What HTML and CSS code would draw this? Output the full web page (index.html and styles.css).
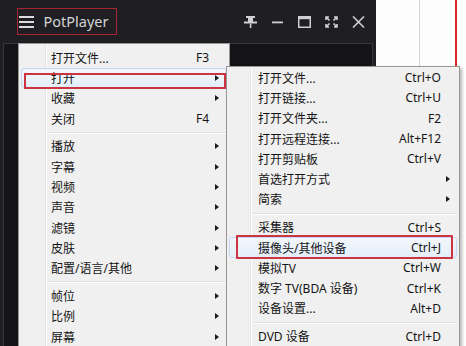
FILE: index.html
```html
<!DOCTYPE html>
<html lang="zh-CN">
<head>
<meta charset="utf-8">
<title>PotPlayer</title>
<link rel="stylesheet" href="styles.css">
</head>
<body>
<div class="screen">
  <div class="player">
    <div class="titlebar">
      <div class="brand">
        <svg class="burger" width="15" height="12" viewBox="0 0 15 12"><rect x="0" y="0" width="15" height="2"/><rect x="0" y="5" width="15" height="2"/><rect x="0" y="10" width="15" height="2"/></svg>
        <span class="brand-name">PotPlayer</span>
      </div>
      <div class="controls">
        <svg width="13" height="12" viewBox="0 0 13 12"><rect x="2" y="0" width="9" height="2"/><rect x="4" y="2" width="5" height="4"/><rect x="0" y="5.5" width="13" height="2"/><rect x="5.8" y="7.5" width="1.6" height="4.5"/></svg>
        <svg width="13" height="12" viewBox="0 0 13 12"><rect x="1" y="5.5" width="11" height="1.8"/></svg>
        <svg width="13" height="12" viewBox="0 0 13 12"><rect x="0.75" y="0.75" width="11.5" height="10.5" fill="none" stroke-width="1.5"/><rect x="0" y="0" width="13" height="3.2"/></svg>
        <svg width="13" height="12" viewBox="0 0 13 12" class="fs"><path d="M1 4V1h3M1 1l3.5 3.5M12 4V1H9M12 1L8.5 4.5M1 8v3h3M1 11l3.5-3.5M12 8v3H9M12 11L8.5 7.5"/></svg>
        <svg width="13" height="12" viewBox="0 0 13 12" class="fs"><path d="M1 0.5l11 11M12 0.5l-11 11"/></svg>
      </div>
    </div>
    <div class="panel"></div>
  </div>
  <div class="side">
    <div class="side-a"></div>
    <div class="side-b"></div>
  </div>

  <div class="menu main-menu">
    <div class="item"><span class="label">打开文件...</span><span class="key">F3</span><span class="arrow-col"></span></div>
    <div class="item hover"><span class="label">打开</span><span class="key"></span><span class="arrow-col"><i class="arrow"></i></span></div>
    <div class="item"><span class="label">收藏</span><span class="key"></span><span class="arrow-col"><i class="arrow"></i></span></div>
    <div class="item"><span class="label">关闭</span><span class="key">F4</span><span class="arrow-col"></span></div>
    <div class="sep"></div>
    <div class="item"><span class="label">播放</span><span class="key"></span><span class="arrow-col"><i class="arrow"></i></span></div>
    <div class="item"><span class="label">字幕</span><span class="key"></span><span class="arrow-col"><i class="arrow"></i></span></div>
    <div class="item"><span class="label">视频</span><span class="key"></span><span class="arrow-col"><i class="arrow"></i></span></div>
    <div class="item"><span class="label">声音</span><span class="key"></span><span class="arrow-col"><i class="arrow"></i></span></div>
    <div class="item"><span class="label">滤镜</span><span class="key"></span><span class="arrow-col"><i class="arrow"></i></span></div>
    <div class="item"><span class="label">皮肤</span><span class="key"></span><span class="arrow-col"><i class="arrow"></i></span></div>
    <div class="item"><span class="label">配置/语言/其他</span><span class="key"></span><span class="arrow-col"><i class="arrow"></i></span></div>
    <div class="sep"></div>
    <div class="item"><span class="label">帧位</span><span class="key"></span><span class="arrow-col"><i class="arrow"></i></span></div>
    <div class="item"><span class="label">比例</span><span class="key"></span><span class="arrow-col"><i class="arrow"></i></span></div>
    <div class="item"><span class="label">屏幕</span><span class="key"></span><span class="arrow-col"><i class="arrow"></i></span></div>
    <div class="mark mark-main"></div>
  </div>

  <div class="menu sub-menu">
    <div class="item"><span class="label">打开文件...</span><span class="key">Ctrl+O</span><span class="arrow-col"></span></div>
    <div class="item"><span class="label">打开链接...</span><span class="key">Ctrl+U</span><span class="arrow-col"></span></div>
    <div class="item"><span class="label">打开文件夹...</span><span class="key">F2</span><span class="arrow-col"></span></div>
    <div class="item"><span class="label">打开远程连接...</span><span class="key">Alt+F12</span><span class="arrow-col"></span></div>
    <div class="item"><span class="label">打开剪贴板</span><span class="key">Ctrl+V</span><span class="arrow-col"></span></div>
    <div class="item"><span class="label">首选打开方式</span><span class="key"></span><span class="arrow-col"><i class="arrow"></i></span></div>
    <div class="item"><span class="label">简索</span><span class="key"></span><span class="arrow-col"><i class="arrow"></i></span></div>
    <div class="sep"></div>
    <div class="item"><span class="label">采集器</span><span class="key">Ctrl+S</span><span class="arrow-col"></span></div>
    <div class="item hover"><span class="label">摄像头/其他设备</span><span class="key">Ctrl+J</span><span class="arrow-col"></span></div>
    <div class="item"><span class="label">模拟TV</span><span class="key">Ctrl+W</span><span class="arrow-col"></span></div>
    <div class="item"><span class="label">数字 TV(BDA 设备)</span><span class="key">Ctrl+K</span><span class="arrow-col"></span></div>
    <div class="item"><span class="label">设备设置...</span><span class="key">Alt+D</span><span class="arrow-col"></span></div>
    <div class="sep"></div>
    <div class="item"><span class="label">DVD 设备</span><span class="key">Ctrl+D</span><span class="arrow-col"></span></div>
    <div class="mark mark-sub"></div>
  </div>
</div>
</body>
</html>
```
FILE: styles.css
```css
* { box-sizing: border-box; }
html, body { margin: 0; padding: 0; }
body {
  width: 466px;
  height: 346px;
  overflow: hidden;
  font-family: "Noto Sans", "Noto Sans CJK SC", sans-serif;
  background: #fdfdfd;
}
.screen {
  position: relative;
  display: flex;
  height: 346px;
}
.player {
  width: 376px;
  background: #1f1f23;
  display: flex;
  flex-direction: column;
}
.titlebar {
  height: 43px;
  display: flex;
  align-items: center;
  padding: 0 11px 0 17px;
}
.brand {
  height: 27px;
  width: 100px;
  border: 1.5px solid #a8242e;
  display: flex;
  align-items: center;
  padding-left: 0.5px;
  gap: 10px;
}
.burger { fill: #dcdcdc; }
.brand-name {
  color: #d4d4d6;
  font-size: 14.5px;
  line-height: 1;
  padding-bottom: 1px;
}
.controls {
  margin-left: auto;
  display: flex;
  gap: 14px;
  align-items: center;
}
.controls svg { fill: #d0d0d2; stroke: #d0d0d2; stroke-width: 0; }
.controls svg rect[fill="none"] { stroke-width: 1.5; }
.controls svg.fs { fill: none; stroke-width: 1.6; }
.panel {
  flex: 1;
  margin: 0 3px;
  border: 1px solid #38383d;
  border-bottom: none;
  background: #141417;
}
.side {
  flex: 1;
  display: flex;
  background: #fdfdfd;
}
.side-a { width: 44px; border-right: 1px solid #d4d4d4; }
.side-b { width: 37px; border-right: 2px solid #d8262a; }

.menu {
  position: absolute;
  border: 1px solid #979797;
  font-size: 12px;
  color: #141414;
}
.main-menu {
  left: 18px;
  top: 43px;
  width: 212px;
  padding-top: 3.5px;
  background: linear-gradient(to right, #f0f0f0 26px, #e2e3e3 26px, #e2e3e3 27px, #ffffff 27px, #ffffff 28px, #f0f0f0 28px);
}
.sub-menu {
  left: 226px;
  top: 66px;
  width: 234px;
  padding-top: 0.5px;
  background: linear-gradient(to right, #f0f0f0 23px, #e2e3e3 23px, #e2e3e3 24px, #ffffff 24px, #ffffff 25px, #f0f0f0 25px);
  box-shadow: 2px 2px 3px rgba(0, 0, 0, 0.28);
}
.item {
  height: 20.3px;
  display: flex;
  align-items: center;
  margin: 0 2px;
  border: 1px solid transparent;
  border-radius: 3px;
}
.main-menu .item { padding-left: 29px; }
.sub-menu .item { padding-left: 28px; }
.item .label {
  flex: 1;
  white-space: nowrap;
}
.item .key {
  white-space: nowrap;
  font-size: 12px;
}
.main-menu .arrow-col { width: 17px; padding-left: 6px; display: flex; align-items: center; }
.sub-menu .arrow-col { width: 15px; padding-left: 5px; display: flex; align-items: center; }
.arrow {
  display: block;
  width: 0;
  height: 0;
  border-left: 4px solid #1b1b1b;
  border-top: 3.5px solid transparent;
  border-bottom: 3.5px solid transparent;
}
.item.hover {
  border-color: #c4d9f3;
  background: linear-gradient(to bottom, #f3f7fc, #e3edf9);
}
.sep {
  height: 1px;
  background: #e0e0e0;
  border-bottom: 1px solid #ffffff;
  box-sizing: content-box;
  margin: 3px 3px 2.5px 29px;
}
.sub-menu .sep { margin: 3px 3px 2.5px 26px; }
.mark {
  position: absolute;
  border: 2px solid #cc3442;
}
.mark-main { left: 5px; top: 29px; width: 202px; height: 16px; }
.mark-sub { left: 9px; top: 168px; width: 217px; height: 24px; border-radius: 1px; }
```
